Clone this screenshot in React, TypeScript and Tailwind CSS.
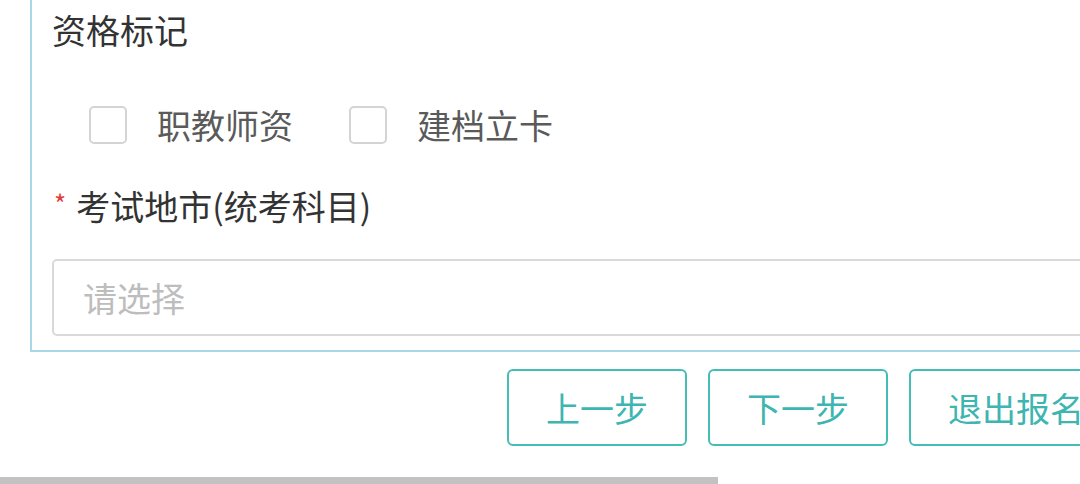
import React from "react";

const FONT = { fontFamily: '"Noto Sans CJK SC", "Noto Sans", sans-serif' };

const MARKS = ["职教师资", "建档立卡"];

function Checkbox({ label }: { label: string }) {
  return (
    <label className="flex items-center">
      <span className="w-[38px] h-[38px] rounded-[5px] border-2 border-[#d4d4d4] bg-white" />
      <span className="ml-[30px] text-[34px] leading-[40px] text-[#5a5a5a]">{label}</span>
    </label>
  );
}

export default function App() {
  return (
    <div className="w-[1080px] h-[484px] overflow-hidden bg-white relative" style={FONT}>
      <div className="ml-[30px] w-[1100px] border-l-2 border-b-2 border-[#a9d7e8] pl-[20px] pt-[10px] pb-[14px]">
        <div className="h-[40px] text-[34px] leading-[40px] text-[#333]">资格标记</div>

        <div className="mt-[55px] ml-[37px] flex items-center gap-[56px] h-[40px]">
          {MARKS.map(m => <Checkbox key={m} label={m} />)}
        </div>

        <div className="mt-[41px] h-[40px] flex items-center">
          <span className="text-[#e23b3b] text-[26px] leading-[40px] ml-[2px] mr-[10px] -mt-[6px]">*</span>
          <span className="text-[34px] leading-[40px] text-[#333]">考试地市(统考科目)</span>
        </div>

        <div className="mt-[33px] h-[77px] rounded-[5px] border-2 border-[#d9d9d9] flex items-center pl-[29px]">
          <span className="text-[34px] text-[#bdbdbd]">请选择</span>
        </div>
      </div>

      <div className="mt-[17px] ml-[507px] flex gap-[21px]">
        <button className="w-[180px] h-[77px] rounded-[6px] border-2 border-[#45bdb7] text-[34px] text-[#3db5b0] shrink-0">上一步</button>
        <button className="w-[180px] h-[77px] rounded-[6px] border-2 border-[#45bdb7] text-[34px] text-[#3db5b0] shrink-0">下一步</button>
        <button className="w-[214px] h-[77px] rounded-[6px] border-2 border-[#45bdb7] text-[34px] text-[#3db5b0] shrink-0">退出报名</button>
      </div>

      <div className="absolute left-0 bottom-0 w-[718px] h-[7px] bg-[#c2c2c2]" />
    </div>
  );
}
